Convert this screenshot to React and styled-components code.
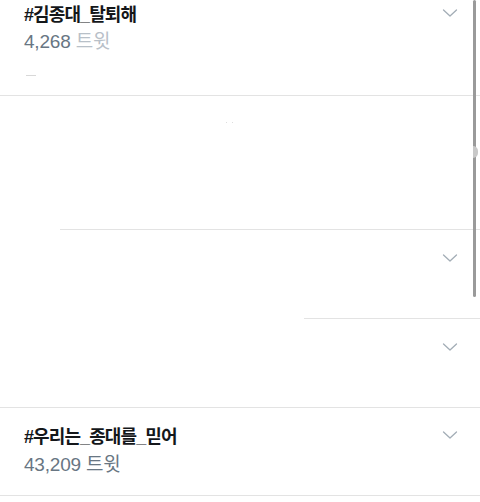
import React from "react";
import styled, { createGlobalStyle } from "styled-components";

const Global = createGlobalStyle`
  html, body { margin: 0; padding: 0; background: #fff; }
  body { font-family: "Liberation Sans", "Noto Sans CJK KR", sans-serif; }
`;

const Page = styled.div`
  position: relative;
  width: 480px;
  height: 502px;
  overflow: hidden;
  background: #fff;
`;

const List = styled.ul`
  list-style: none;
  margin: 0;
  padding: 0;
  display: flex;
  flex-direction: column;
`;

const Row = styled.li`
  position: relative;
  box-sizing: border-box;
  height: ${(p) => p.$h}px;
  padding: ${(p) => p.$pt}px 20px 0 24px;
  display: flex;
  flex-direction: column;
`;

const Divider = styled.div`
  position: absolute;
  left: ${(p) => p.$inset || 0}px;
  right: 0;
  bottom: 0;
  height: 1px;
  background: #e3e3e3;
`;

const Head = styled.div`
  display: flex;
  align-items: center;
  justify-content: space-between;
  height: 22px;
`;

const Title = styled.span`
  font-size: 18px;
  font-weight: 700;
  color: #14171a;
  letter-spacing: -0.9px;
  line-height: 22px;
  padding-top: 1px;
`;

const Count = styled.span`
  margin-top: ${(p) => p.$gap}px;
  font-size: 19px;
  line-height: 22px;
  color: #687683;
  letter-spacing: -0.2px;
  & > em {
    font-style: normal;
    color: ${(p) => (p.$faint ? "#b8c0c8" : "#687683")};
  }
`;

const Chevron = styled.svg`
  width: 16px;
  height: 10px;
  margin-right: 2px;
  margin-top: -2px;
  flex: none;
`;

const Remnant = styled.div`
  margin-top: 22px;
  width: 10px;
  height: 1px;
  background: #d8d8d8;
  margin-left: 2px;
`;

const Dots = styled.div`
  position: absolute;
  left: 226px;
  top: 26px;
  width: 5px;
  height: 1px;
  border-left: 1px solid #ddd;
  border-right: 1px solid #ddd;
`;

const Scrollbar = styled.div`
  position: absolute;
  top: 0;
  left: 473px;
  width: 3px;
  height: 297px;
  border-radius: 2px;
  background: #9a9a9a;
`;

const Knob = styled.div`
  position: absolute;
  top: 146px;
  left: 473px;
  width: 5px;
  height: 12px;
  border-radius: 0 6px 6px 0;
  background: #c8c8c8;
`;

const Down = () => (
  <Chevron viewBox="0 0 16 10" aria-hidden="true">
    <path d="M1.5 2 L8 8 L14.5 2" fill="none" stroke="#a3adb6" strokeWidth="1.3" strokeLinecap="round" strokeLinejoin="round" />
  </Chevron>
);

export default function App() {
  return (
    <Page>
      <Global />
      <List>
        <Row $h={96} $pt={3}>
          <Head>
            <Title>#김종대_탈퇴해</Title>
            <Down />
          </Head>
          <Count $gap={6} $faint>
            4,268 <em>트윗</em>
          </Count>
          <Remnant />
          <Divider />
        </Row>
        <Row $h={134} $pt={0}>
          <Dots />
          <Divider $inset={60} />
        </Row>
        <Row $h={89} $pt={18}>
          <Head>
            <span />
            <Down />
          </Head>
          <Divider $inset={304} />
        </Row>
        <Row $h={89} $pt={18}>
          <Head>
            <span />
            <Down />
          </Head>
          <Divider />
        </Row>
        <Row $h={88} $pt={17}>
          <Head>
            <Title>#우리는_종대를_믿어</Title>
            <Down />
          </Head>
          <Count $gap={7}>
            43,209 <em>트윗</em>
          </Count>
          <Divider />
        </Row>
      </List>
      <Scrollbar />
      <Knob />
    </Page>
  );
}
